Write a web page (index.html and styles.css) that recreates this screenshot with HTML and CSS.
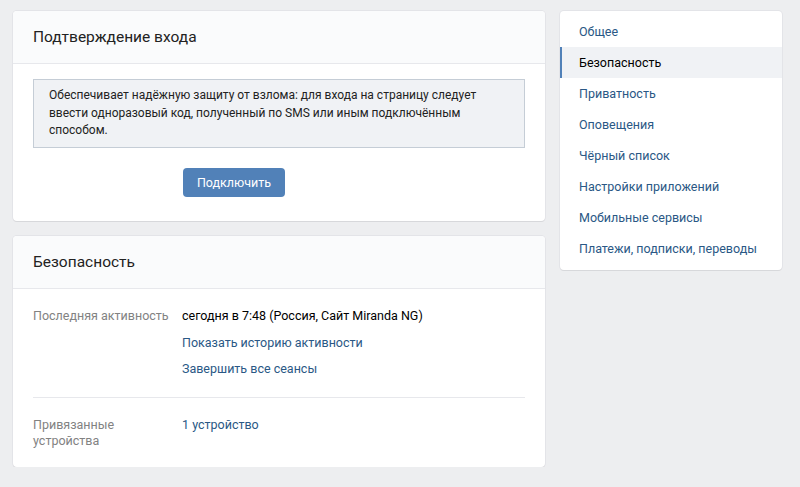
FILE: index.html
```html
<!DOCTYPE html>
<html>
<head>
    <title>Настройки</title>
    <link rel="stylesheet" href="styles.css">
</head>
<body>
    <div class="page">
        <div class="main">
            <div class="card">
                <div class="card-header">Подтверждение входа</div>
                <div class="card-body confirm">
                    <div class="info-box">Обеспечивает надёжную защиту от взлома: для входа на страницу следует ввести одноразовый код, полученный по SMS или иным подключённым способом.</div>
                    <button class="btn">Подключить</button>
                </div>
            </div>

            <div class="card">
                <div class="card-header">Безопасность</div>
                <div class="card-body security">
                    <div class="row">
                        <div class="label">Последняя активность</div>
                        <div class="value">
                            <div>сегодня в 7:48 (Россия, Сайт Miranda NG)</div>
                            <a class="link" href="#">Показать историю активности</a>
                            <a class="link" href="#">Завершить все сеансы</a>
                        </div>
                    </div>
                    <div class="divider"></div>
                    <div class="row">
                        <div class="label">Привязанные устройства</div>
                        <div class="value"><a class="link first" href="#">1 устройство</a></div>
                    </div>
                </div>
            </div>
        </div>

        <div class="menu">
            <a class="menu-item" href="#">Общее</a>
            <a class="menu-item selected" href="#">Безопасность</a>
            <a class="menu-item" href="#">Приватность</a>
            <a class="menu-item" href="#">Оповещения</a>
            <a class="menu-item" href="#">Чёрный список</a>
            <a class="menu-item" href="#">Настройки приложений</a>
            <a class="menu-item" href="#">Мобильные сервисы</a>
            <a class="menu-item" href="#">Платежи, подписки, переводы</a>
        </div>
    </div>
</body>
</html>
```

FILE: styles.css
```css
body {
    font-family: Roboto, "Open Sans", Arial, sans-serif;
    font-size: 12.5px;
    color: #000;
    background-color: #edeef0;
    margin: 0;
    padding: 0;
}

.page {
    display: flex;
    align-items: flex-start;
    gap: 15px;
    padding: 11px 0 0 13px;
}

.main {
    width: 532px;
    display: flex;
    flex-direction: column;
    gap: 15px;
}

.card {
    background-color: #fff;
    border-radius: 4px;
    box-shadow: 0 1px 0 0 #d7d8db, 0 0 0 1px #e3e4e8;
    overflow: hidden;
}

.card-header {
    background-color: #fafbfc;
    border-bottom: 1px solid #e7e8ec;
    height: 52px;
    line-height: 52px;
    padding: 0 20px;
    font-size: 15.5px;
    color: #222;
}

.card-body {
    padding: 15px 20px 24px;
}

.info-box {
    background-color: #f0f2f5;
    border: 1px solid #c5cdd6;
    padding: 7px 15px;
    line-height: 17.5px;
    font-size: 12px;
    color: #222;
}

.btn {
    display: block;
    margin: 20px 0 0 150px;
    width: 102px;
    height: 29px;
    background-color: #5181b8;
    color: #fff;
    border: none;
    border-radius: 4px;
    font-family: inherit;
    font-size: 12.5px;
    cursor: pointer;
}

.card-body.security {
    padding: 18px 20px 18px;
}

.row {
    display: flex;
    line-height: 17px;
}

.label {
    width: 149px;
    color: #828282;
    line-height: 16px;
    padding-top: 1px;
}

.value {
    flex: 1;
    display: flex;
    flex-direction: column;
}

.link {
    color: #2a5885;
    text-decoration: none;
    margin-top: 0;
}

.value div + .link {
    margin-top: 10px;
}

.value .link + .link {
    margin-top: 9px;
}

.divider {
    height: 1px;
    background-color: #e7e8ec;
    margin: 20px 0 18px;
}

.menu {
    width: 222px;
    background-color: #fff;
    border-radius: 4px;
    box-shadow: 0 1px 0 0 #d7d8db, 0 0 0 1px #e3e4e8;
    padding: 5px 0 6px;
    display: flex;
    flex-direction: column;
}

.menu-item {
    height: 31px;
    line-height: 31px;
    color: #2a5885;
    text-decoration: none;
    border-left: 2px solid transparent;
    margin-left: -2px;
    padding-left: 19px;
}

.menu-item.selected {
    background-color: #f0f2f5;
    border-left-color: #5181b8;
    color: #000;
    margin-left: 0;
    padding-left: 17px;
}
```
